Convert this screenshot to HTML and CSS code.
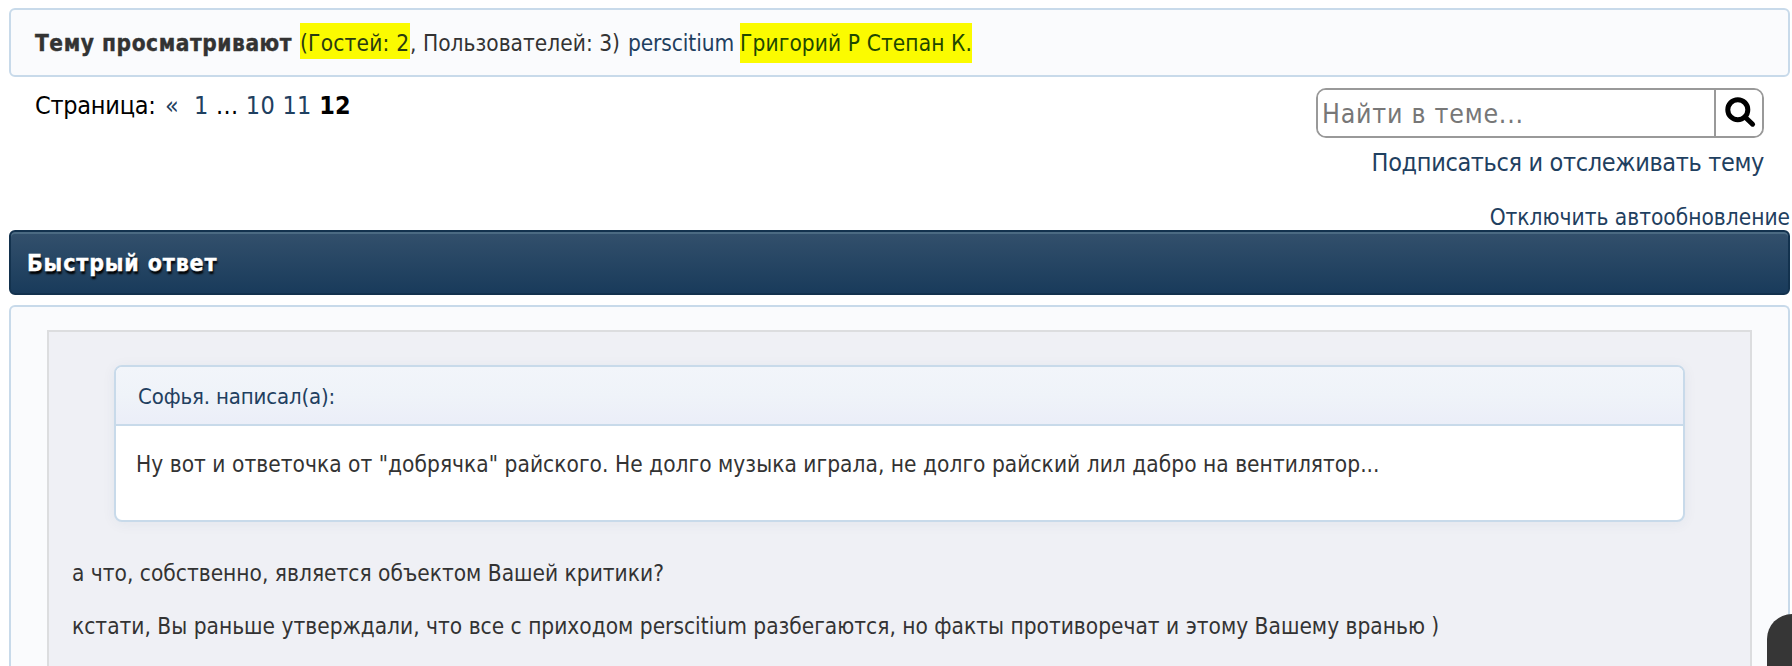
FILE: index.html
```
<!DOCTYPE html>
<html lang="ru">
<head>
<meta charset="utf-8">
<title>Быстрый ответ</title>
<link rel="stylesheet" href="styles.css">
</head>
<body>
<div class="viewers">
  <b class="viewers-label">Тему просматривают</b>
  <span class="mark mark-guests">(Гостей: 2</span><span class="users">, Пользователей: 3)</span>
  <a class="user">perscitium</a>
  <a class="mark mark-users">Григорий Р Степан К.</a>
</div>
<div class="toolbar">
  <div class="pager"><span class="pager-label">Страница:</span><a class="prev">«</a><span class="pages"><a>1</a> ... <a>10</a> <a>11</a> <b>12</b></span></div>
  <div class="tools">
    <div class="search">
      <input class="search-input" type="text" placeholder="Найти в теме...">
      <button class="search-button" aria-label="Найти">
        <svg width="34" height="34" viewBox="0 0 34 34" fill="none" stroke="#000" stroke-width="5"><circle cx="14.8" cy="14.7" r="10"/><path d="M22 22l7.6 7.2" stroke-linecap="round"/></svg>
      </button>
    </div>
    <a class="subscribe">Подписаться и отслеживать тему</a>
  </div>
</div>
<a class="autoupdate">Отключить автообновление</a>
<h2 class="heading">Быстрый ответ</h2>
<div class="panel">
  <div class="preview">
    <div class="quote">
      <div class="quote-author">Софья. написал(а):</div>
      <div class="quote-body">Ну вот и ответочка от "добрячка" райского. Не долго музыка играла, не долго райский лил дабро на вентилятор...</div>
    </div>
    <p class="text">а что, собственно, является объектом Вашей критики?</p>
    <p class="text">кстати, Вы раньше утверждали, что все с приходом perscitium разбегаются, но факты противоречат и этому Вашему вранью )</p>
  </div>
</div>
<div class="corner-button"></div>
</body>
</html>
```
FILE: styles.css
```
* { box-sizing: border-box; }
body {
  margin: 0;
  padding: 8px 2px 0 9px;
  height: 666px;
  overflow: hidden;
  background: #fff;
  color: #333;
  font-family: "DejaVu Sans Condensed", "DejaVu Sans", sans-serif;
  font-stretch: condensed;
  font-size: 22.5px;
  white-space: nowrap;
}
a { color: #1f4060; }
.viewers {
  display: flex;
  height: 69px;
  padding: 13px 24px 12px;
  border: 2px solid #c8daea;
  border-radius: 6px;
  background: #fafbfd;
  line-height: 40px;
}
.viewers-label { width: 265px; letter-spacing: .55px; -webkit-text-stroke: .35px; }
.mark { color: #2a3c10; background: linear-gradient(#fbfb00, #fbfb00) no-repeat; }
.mark-guests { width: 110px; letter-spacing: .2px; background-size: 100% 36px; }
.users { width: 218px; letter-spacing: .02px; }
.user { width: 112px; letter-spacing: -.1px; }
.mark-users { width: 232px; letter-spacing: .1px; color: #1f4800; }
.toolbar {
  display: flex;
  justify-content: space-between;
  height: 127px;
  padding: 11px 26px 0 25px;
  font-size: 25px;
  line-height: 36px;
}
.pager { display: flex; padding-left: 1px; color: #000; }
.pager-label { width: 130px; letter-spacing: -.25px; }
.prev { width: 29px; }
.pages { letter-spacing: .3px; }
.tools { display: flex; flex-direction: column; align-items: flex-end; gap: 7px; }
.search {
  display: flex;
  width: 448px;
  height: 50px;
  border: 2px solid #999;
  border-radius: 10px;
  overflow: hidden;
}
.search-input {
  flex: 1;
  min-width: 0;
  padding: 2px 4px 0;
  border: 0;
  background: #fff;
  font: inherit;
  font-stretch: condensed;
  font-size: 26.5px;
  letter-spacing: .75px;
}
.search-input::placeholder { color: #777; opacity: 1; }
.search-button {
  display: flex;
  align-items: center;
  justify-content: center;
  width: 48px;
  padding: 0 0 2px 1px;
  border: 0;
  border-left: 2px solid #999;
  background: #fff;
}
.subscribe { letter-spacing: -.35px; }
.autoupdate { display: block; margin-top: 0; line-height: 26px; text-align: right; }
.heading {
  height: 65px;
  margin: 0 0 10px;
  padding: 2px 16px 0;
  border: 2px solid #13324e;
  border-radius: 6px;
  background: linear-gradient(#33506c, #193b5b);
  box-shadow: inset 0 2px 0 #4b6a82;
  color: #fff;
  font-size: 23px;
  line-height: 58px;
  letter-spacing: .85px;
  -webkit-text-stroke: .35px;
  text-shadow: 1px 3px 2px #000;
}
.panel {
  height: 361px;
  padding: 23px 36px 0;
  border: 2px solid #c8daea;
  border-bottom: 0;
  border-radius: 6px 6px 0 0;
  background: #fafbfd;
}
.preview {
  height: 336px;
  padding: 33px 23px 0;
  border: 2px solid #dcdddf;
  border-bottom: 0;
  background: #eff0f5;
}
.quote {
  height: 157px;
  margin: 0 42px 31px;
  border: 2px solid #c8daea;
  border-radius: 8px;
  background: #fff;
  box-shadow: 0 2px 14px rgba(40, 60, 110, .06);
  overflow: hidden;
}
.quote-author {
  height: 59px;
  padding: 1px 22px 0;
  border-bottom: 2px solid #c8daea;
  background: linear-gradient(#f2f5fa, #eff3f9 50%, #ebeef8);
  color: #1f4060;
  font-size: 22px;
  line-height: 57px;
  letter-spacing: -.15px;
}
.quote-body { padding: 18px 20px; line-height: 40px; letter-spacing: .03px; }
.text { margin: 0 0 13px; line-height: 40px; }
.corner-button {
  position: fixed;
  right: 0;
  bottom: 0;
  width: 25px;
  height: 52px;
  border-top-left-radius: 28px;
  background: #363636;
}
```
